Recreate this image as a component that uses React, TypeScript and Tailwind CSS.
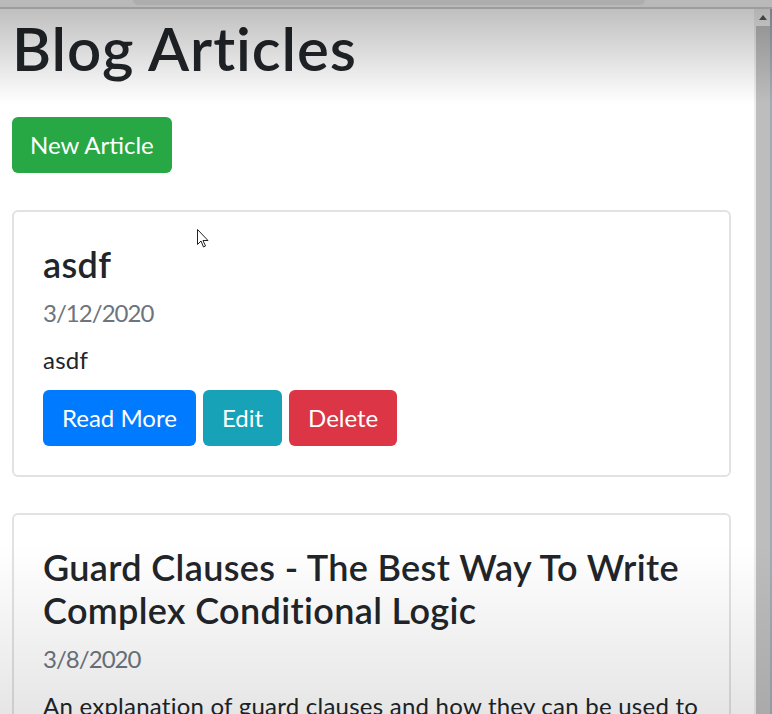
import React from "react";

type Post = { title: string; date: string; body: string };

const posts: Post[] = [
  { title: "asdf", date: "3/12/2020", body: "asdf" },
  {
    title: "Guard Clauses - The Best Way To Write Complex Conditional Logic",
    date: "3/8/2020",
    body: "An explanation of guard clauses and how they can be used to clean up complex conditional logic in any language.",
  },
];

function Btn({ color, children }: { color: string; children: React.ReactNode }) {
  return (
    <button
      className={
        "h-[56px] px-[19px] rounded-[6px] text-white text-[24px] leading-[36px] flex items-center " + color
      }
    >
      {children}
    </button>
  );
}

function Card({ post }: { post: Post }) {
  return (
    <div className="border-2 border-[#e2e2e2] rounded-[6px] bg-white pt-[31px] pb-[29px] px-[29px] mb-[36px]">
      <h4 className="text-[36px] leading-[43px] font-semibold tracking-[0.01em] text-[#212529]">{post.title}</h4>
      <div className="mt-[9px] text-[24px] leading-[36px] tracking-[-0.04em] text-[#6c757d]">{post.date}</div>
      <p className="mt-[11px] text-[24px] leading-[36px] tracking-[0.01em] text-[#212529]">{post.body}</p>
      <div className="mt-[12px] flex gap-[7px]">
        <Btn color="bg-[#007bff]">Read More</Btn>
        <Btn color="bg-[#17a2b8]">Edit</Btn>
        <Btn color="bg-[#dc3545]">Delete</Btn>
      </div>
    </div>
  );
}

export default function App() {
  return (
    <div className="relative w-[772px] h-[714px] overflow-hidden bg-white font-['Lato','Open_Sans',sans-serif]">
      {/* browser chrome strip */}
      <div className="h-[9px] bg-[#b9b9b9] border-b-2 border-[#9d9d9d]">
        <div className="ml-[133px] w-[512px] h-[5px] rounded-b-[8px] bg-[#adadad]" />
      </div>

      <div className="flex h-[705px]">
        <main className="flex-1 overflow-hidden pl-[12px] pr-[23px]">
          <h1 className="mt-[3px] text-[60px] leading-[72px] font-semibold tracking-[0.015em] text-[#212529]">
            Blog Articles
          </h1>
          <button className="mt-[33px] h-[56px] px-[18px] rounded-[6px] bg-[#28a745] text-white text-[24px] flex items-center">
            New Article
          </button>
          <div className="mt-[37px]">
            {posts.map((p) => (
              <Card key={p.date} post={p} />
            ))}
          </div>
        </main>

        {/* scrollbar */}
        <div className="w-[18px] flex bg-[#eeeeee]">
          <div className="flex-1 flex flex-col items-center pl-[2px]">
            <div className="h-[17px] flex items-center justify-center">
              <svg width="8" height="5" viewBox="0 0 8 5">
                <path d="M0 5 L4 0 L8 5 Z" fill="#555" />
              </svg>
            </div>
            <div className="flex-1 w-full bg-[#bdbdbd]" />
          </div>
          <div className="w-[2px] bg-[#9fabb6]" />
        </div>
      </div>

      {/* video vignette */}
      <div className="pointer-events-none absolute left-0 right-0 top-[9px] h-[95px] bg-gradient-to-b from-black/25 to-transparent" />
      <div className="pointer-events-none absolute left-0 right-0 bottom-0 h-[170px] bg-gradient-to-t from-black/10 to-transparent" />

      {/* mouse cursor */}
      <svg className="absolute left-[197px] top-[229px]" width="12" height="19" viewBox="0 0 12 19">
        <path d="M0.5 0.5 L0.5 15.5 L4 12 L6.5 18 L8.5 17 L6 11.5 L11 11.5 Z" fill="#fff" stroke="#222" strokeWidth="1" />
      </svg>
    </div>
  );
}
